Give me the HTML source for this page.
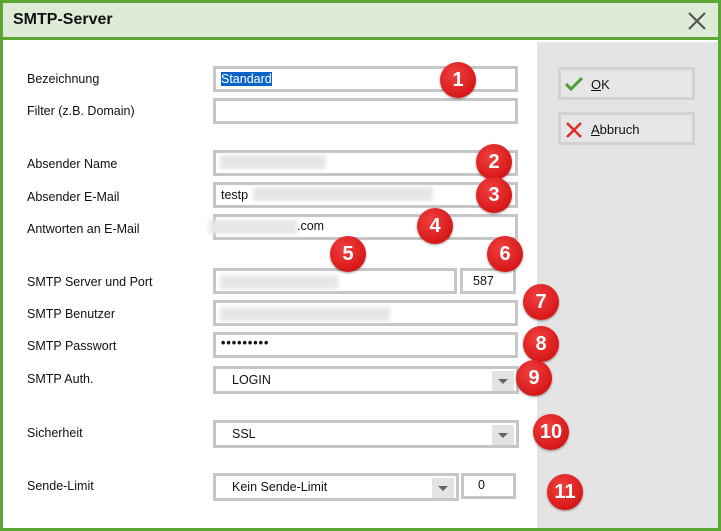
<!DOCTYPE html><html><head><style>
*{box-sizing:border-box;margin:0;padding:0}
body{width:721px;height:531px;position:relative;overflow:hidden;background:#fff;font-family:"Liberation Sans",sans-serif;font-size:12.5px;color:#111}
.frame{position:absolute;left:0;top:0;width:721px;height:531px;border:3px solid #5ba733}
.title{position:absolute;left:3px;top:3px;width:715px;height:37px;background:#deebd6;border-bottom:3px solid #5ba733}
.title span{position:absolute;left:10px;top:8px;font-size:16px;font-weight:bold}
.side{position:absolute;left:537px;top:42px;width:181px;height:486px;background:#e4e4e4}
.l{position:absolute;left:27px}
.in{position:absolute;background:#fff;border:3px solid #c6c6c6;height:26px}
.in span{position:absolute;left:5px;top:3px}
.blur{position:absolute;background:#e6e6e6;height:14px;filter:blur(2px)}
.dd{position:absolute;width:22px;height:20px;background:#e3e3e3;top:0}
.dd:after{content:"";position:absolute;left:6px;top:8px;border-left:5px solid transparent;border-right:5px solid transparent;border-top:5px solid #666}
.c{position:absolute;width:36px;height:36px;border-radius:50%;background:radial-gradient(circle at 40% 35%,#f04040,#d81818 70%,#b01010);color:#fff;font-weight:bold;font-size:20px;text-align:center;line-height:36px;box-shadow:0 1px 2px rgba(0,0,0,.4)}
.btn{position:absolute;left:558px;width:137px;border:3px solid #d2d2d2;background:#e6e6e6;height:33px}
.btn span{position:absolute;left:30px;top:7px;font-size:13px}
</style></head><body>
<div class="frame"></div>
<div class="title"><span>SMTP-Server</span>
<svg style="position:absolute;right:12px;top:9px" width="18" height="18"><path d="M1 1L17 17M17 1L1 17" stroke="#555" stroke-width="2.2"/></svg></div>
<div class="side"></div>
<div class="btn" style="top:67px"><svg style="position:absolute;left:3px;top:6px" width="20" height="16"><path d="M2 8L7 13L18 2" stroke="#4aa02c" stroke-width="3" fill="none"/></svg><span><u>O</u>K</span></div>
<div class="btn" style="top:112px"><svg style="position:absolute;left:4px;top:6px" width="18" height="18"><path d="M2 2L16 16M16 2L2 16" stroke="#e02828" stroke-width="2.5"/></svg><span><u>A</u>bbruch</span></div>

<div class="l" style="top:72px">Bezeichnung</div>
<div class="l" style="top:104px">Filter (z.B. Domain)</div>
<div class="l" style="top:157px">Absender Name</div>
<div class="l" style="top:190px">Absender E-Mail</div>
<div class="l" style="top:222px">Antworten an E-Mail</div>
<div class="l" style="top:275px">SMTP Server und Port</div>
<div class="l" style="top:307px">SMTP Benutzer</div>
<div class="l" style="top:339px">SMTP Passwort</div>
<div class="l" style="top:372px">SMTP Auth.</div>
<div class="l" style="top:426px">Sicherheit</div>
<div class="l" style="top:479px">Sende-Limit</div>

<div class="in" style="left:213px;top:66px;width:305px"><span style="background:#0a64c8;color:#fff;left:5px;top:3px">Standard</span></div>
<div class="in" style="left:213px;top:98px;width:305px"></div>
<div class="in" style="left:213px;top:150px;width:305px"><div class="blur" style="left:4px;top:2px;width:106px"></div></div>
<div class="in" style="left:213px;top:182px;width:305px"><span>testp</span><div class="blur" style="left:37px;top:2px;width:180px"></div></div>
<div class="in" style="left:213px;top:214px;width:305px"></div>
<div class="blur" style="left:209px;top:220px;width:88px"></div>
<div style="position:absolute;left:297px;top:219px">.com</div>
<div class="in" style="left:213px;top:268px;width:244px"><div class="blur" style="left:4px;top:4px;width:118px"></div></div>
<div class="in" style="left:460px;top:268px;width:56px"><span style="left:10px">587</span></div>
<div class="in" style="left:213px;top:300px;width:305px"><div class="blur" style="left:4px;top:4px;width:170px"></div></div>
<div class="in" style="left:213px;top:332px;width:305px"><span style="letter-spacing:1px;top:1px;font-weight:bold">•••••••••</span></div>
<div class="in" style="left:213px;top:366px;width:306px;height:28px"><span style="left:16px;top:4px">LOGIN</span><div class="dd" style="right:2px;top:2px"></div></div>
<div class="in" style="left:213px;top:420px;width:306px;height:28px"><span style="left:16px;top:4px">SSL</span><div class="dd" style="right:2px;top:2px"></div></div>
<div class="in" style="left:213px;top:473px;width:246px;height:28px"><span style="left:16px;top:4px">Kein Sende-Limit</span><div class="dd" style="right:2px;top:2px"></div></div>
<div class="in" style="left:461px;top:473px;width:55px"><span style="left:14px;top:2px">0</span></div>

<div class="c" style="left:440px;top:62px">1</div>
<div class="c" style="left:476px;top:144px">2</div>
<div class="c" style="left:476px;top:177px">3</div>
<div class="c" style="left:417px;top:208px">4</div>
<div class="c" style="left:330px;top:236px">5</div>
<div class="c" style="left:487px;top:236px">6</div>
<div class="c" style="left:523px;top:284px">7</div>
<div class="c" style="left:523px;top:326px">8</div>
<div class="c" style="left:516px;top:360px">9</div>
<div class="c" style="left:533px;top:414px">10</div>
<div class="c" style="left:547px;top:474px">11</div>
</body></html>
